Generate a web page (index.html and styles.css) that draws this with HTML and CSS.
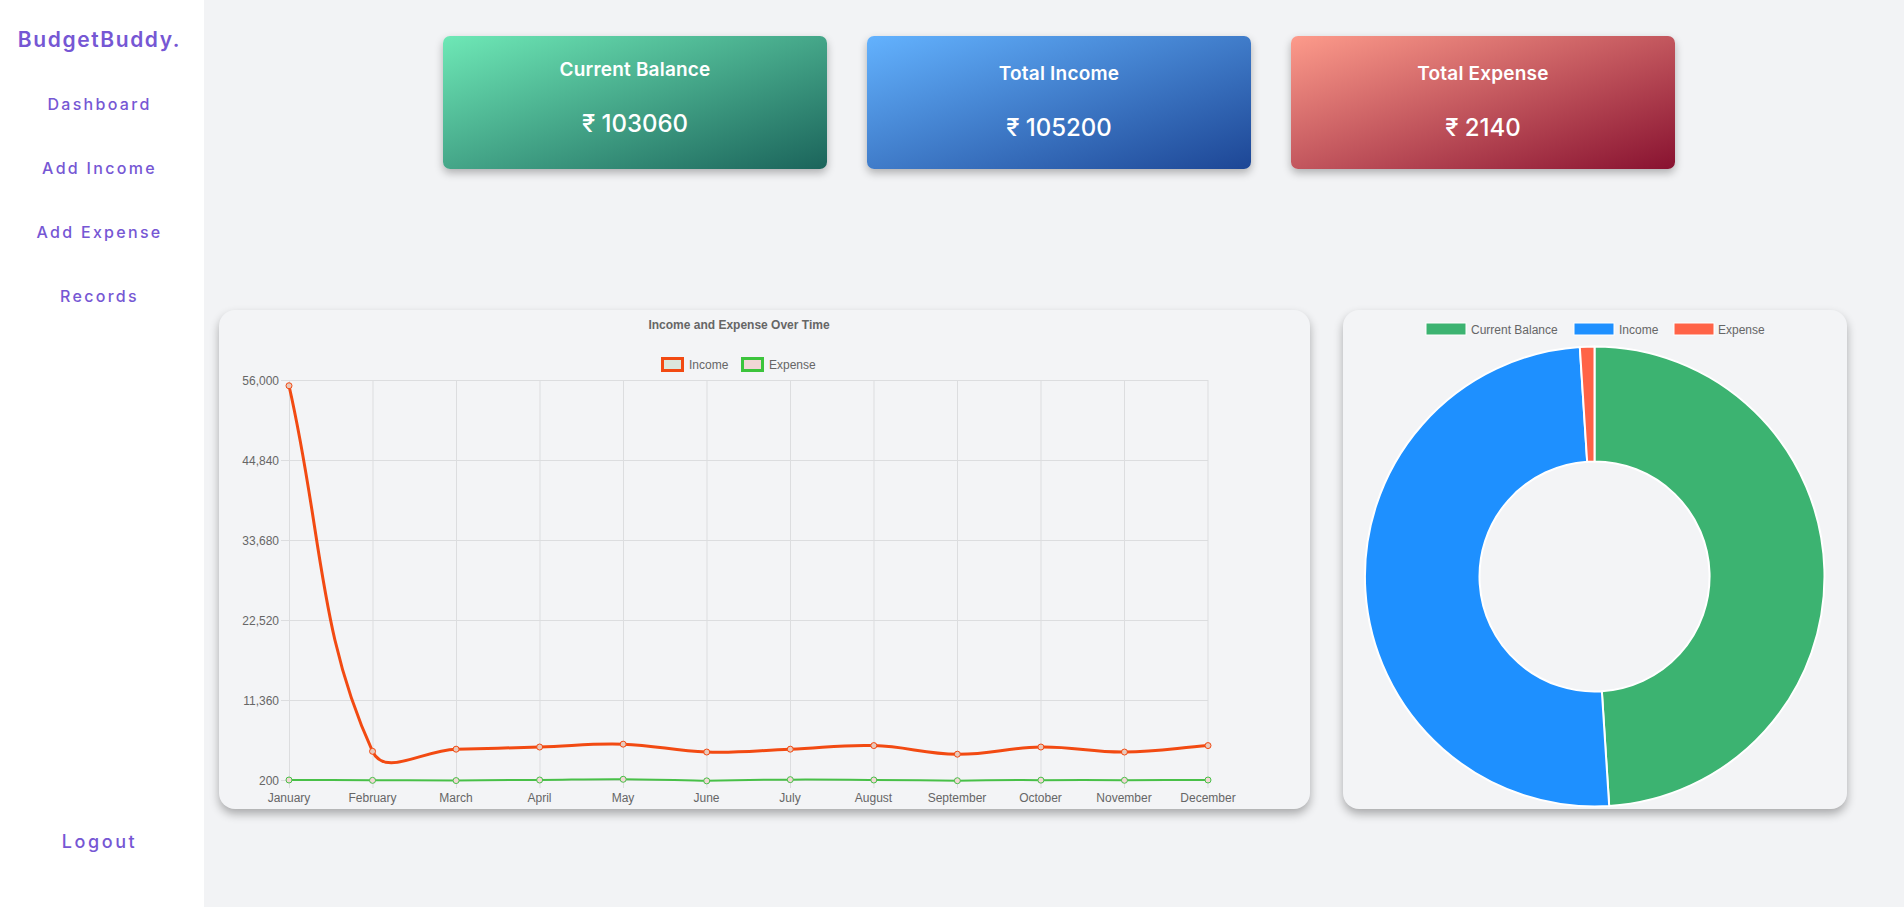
FILE: index.html
```html
<!DOCTYPE html>
<html lang="en">
<head>
<meta charset="utf-8">
<title>BudgetBuddy</title>
<link rel="stylesheet" href="styles.css">
</head>
<body>
<div class="app">
  <aside class="sidebar">
    <div class="logo">BudgetBuddy.</div>
    <nav class="nav">
      <a href="#">Dashboard</a>
      <a href="#">Add Income</a>
      <a href="#">Add Expense</a>
      <a href="#">Records</a>
    </nav>
    <a class="logout" href="#">Logout</a>
  </aside>

  <main class="main">
    <section class="cards">
      <div class="card card-balance card-first">
        <div class="card-title">Current Balance</div>
        <div class="card-value">₹ 103060</div>
      </div>
      <div class="card card-income">
        <div class="card-title">Total Income</div>
        <div class="card-value">₹ 105200</div>
      </div>
      <div class="card card-expense">
        <div class="card-title">Total Expense</div>
        <div class="card-value">₹ 2140</div>
      </div>
    </section>

    <section class="charts">
      <div class="chart-card line-card">
        <svg class="chart-svg" viewBox="0 0 1091 499" width="1091" height="499">
          <text class="chart-title" x="520" y="19" text-anchor="middle">Income and Expense Over Time</text>
          <rect x="443.5" y="48.5" width="20" height="12" fill="#dbe7dc" stroke="#f24a12" stroke-width="3"/>
          <text class="chart-label" x="470" y="59">Income</text>
          <rect x="523.5" y="48.5" width="20" height="12" fill="#f2d6d6" stroke="#3cc43c" stroke-width="3"/>
          <text class="chart-label" x="550" y="59">Expense</text>

          <g class="grid" stroke="#dcdddf" stroke-width="1">
            <line x1="62" y1="70.5" x2="989" y2="70.5"/>
            <line x1="62" y1="150.5" x2="989" y2="150.5"/>
            <line x1="62" y1="230.5" x2="989" y2="230.5"/>
            <line x1="62" y1="310.5" x2="989" y2="310.5"/>
            <line x1="62" y1="390.5" x2="989" y2="390.5"/>
            <line x1="62" y1="470.5" x2="989" y2="470.5"/>
            <line x1="70.5" y1="70" x2="70.5" y2="478"/>
            <line x1="154" y1="70" x2="154" y2="478"/>
            <line x1="237.5" y1="70" x2="237.5" y2="478"/>
            <line x1="321" y1="70" x2="321" y2="478"/>
            <line x1="404.5" y1="70" x2="404.5" y2="478"/>
            <line x1="488" y1="70" x2="488" y2="478"/>
            <line x1="571.5" y1="70" x2="571.5" y2="478"/>
            <line x1="655" y1="70" x2="655" y2="478"/>
            <line x1="738.5" y1="70" x2="738.5" y2="478"/>
            <line x1="822" y1="70" x2="822" y2="478"/>
            <line x1="905.5" y1="70" x2="905.5" y2="478"/>
            <line x1="989" y1="70" x2="989" y2="478"/>
          </g>

          <g class="y-labels" text-anchor="end">
            <text class="chart-label" x="60" y="75">56,000</text>
            <text class="chart-label" x="60" y="155">44,840</text>
            <text class="chart-label" x="60" y="235">33,680</text>
            <text class="chart-label" x="60" y="315">22,520</text>
            <text class="chart-label" x="60" y="395">11,360</text>
            <text class="chart-label" x="60" y="475">200</text>
          </g>

          <g class="x-labels" text-anchor="middle">
            <text class="chart-label" x="70" y="492">January</text>
            <text class="chart-label" x="153.5" y="492">February</text>
            <text class="chart-label" x="237" y="492">March</text>
            <text class="chart-label" x="320.5" y="492">April</text>
            <text class="chart-label" x="404" y="492">May</text>
            <text class="chart-label" x="487.5" y="492">June</text>
            <text class="chart-label" x="571" y="492">July</text>
            <text class="chart-label" x="654.5" y="492">August</text>
            <text class="chart-label" x="738" y="492">September</text>
            <text class="chart-label" x="821.5" y="492">October</text>
            <text class="chart-label" x="905" y="492">November</text>
            <text class="chart-label" x="989" y="492">December</text>
          </g>

          <g id="expense-series"></g>
          <g id="income-series"></g>
        </svg>
      </div>

      <div class="chart-card donut-card">
        <svg class="chart-svg" viewBox="0 0 504 499" width="504" height="499">
          <rect x="83" y="13" width="40" height="12" fill="#3cb371" stroke="#fff" stroke-width="1"/>
          <text class="chart-label" x="128" y="23.5">Current Balance</text>
          <rect x="231" y="13" width="40" height="12" fill="#1e90ff" stroke="#fff" stroke-width="1"/>
          <text class="chart-label" x="276" y="23.5">Income</text>
          <rect x="331" y="13" width="40" height="12" fill="#ff6347" stroke="#fff" stroke-width="1"/>
          <text class="chart-label" x="375" y="23.5">Expense</text>

          <g stroke="#fff" stroke-width="2" stroke-linejoin="round">
            <path fill="#3cb371" d="M 251.5 36.5 A 230 230 0 0 1 266.19 496.03 L 258.85 381.27 A 115 115 0 0 0 251.5 151.5 Z"/>
            <path fill="#1e90ff" d="M 266.19 496.03 A 230 230 0 0 1 236.81 36.97 L 244.16 151.73 A 115 115 0 0 0 258.85 381.27 Z"/>
            <path fill="#ff6347" d="M 236.81 36.97 A 230 230 0 0 1 251.5 36.5 L 251.5 151.5 A 115 115 0 0 0 244.16 151.73 Z"/>
          </g>
        </svg>
      </div>
    </section>
  </main>
</div>
<script src="app.js"></script>
</body>
</html>
```

FILE: styles.css
```css
* {
  box-sizing: border-box;
}

body {
  margin: 0;
  background: #f2f3f5;
  font-family: Inter, "Noto Sans", "DejaVu Sans", sans-serif;
}

.app {
  display: flex;
  height: 100vh;
}

/* Sidebar */
.sidebar {
  width: 204px;
  flex: none;
  background: #ffffff;
  display: flex;
  flex-direction: column;
  align-items: center;
  padding: 28px 5px 53px 0;
}

.logo {
  font-size: 21px;
  line-height: 24px;
  font-weight: 600;
  letter-spacing: 1.6px;
  color: #7657d4;
}

.nav {
  display: flex;
  flex-direction: column;
  align-items: center;
  gap: 44px;
  margin-top: 42px;
}

.nav a,
.logout {
  color: #7657d4;
  text-decoration: none;
  font-weight: 500;
}

.nav a {
  font-size: 16px;
  line-height: 20px;
  letter-spacing: 2.3px;
}

.logout {
  margin-top: auto;
  font-size: 18px;
  line-height: 24px;
  letter-spacing: 2.6px;
}

/* Main */
.main {
  flex: 1;
  display: flex;
  flex-direction: column;
  padding: 36px 57px 0 15px;
}

.cards {
  display: flex;
  justify-content: center;
  gap: 40px;
  padding-left: 52px;
}

.card {
  width: 384px;
  height: 133px;
  border-radius: 7px;
  color: #ffffff;
  text-align: center;
  padding-top: 27px;
  box-shadow: 0 4px 9px rgba(0, 0, 0, 0.28);
}

.card-first {
  padding-top: 23px;
}

.card-balance {
  background: linear-gradient(to bottom right, #6ee8b6, #1b645b);
}

.card-income {
  background: linear-gradient(to bottom right, #63b2fe, #1d4695);
}

.card-expense {
  background: linear-gradient(to bottom right, #fd9b8b, #881230);
}

.card-title {
  font-size: 19px;
  line-height: 22px;
  font-weight: 600;
  letter-spacing: 0.2px;
}

.card-value {
  margin-top: 28px;
  font-size: 24px;
  line-height: 30px;
  font-weight: 500;
}

/* Charts */
.charts {
  display: flex;
  gap: 33px;
  margin-top: 141px;
  height: 499px;
}

.chart-card {
  height: 499px;
  background: #f3f4f6;
  border-radius: 16px;
  box-shadow: 0 5px 10px rgba(0, 0, 0, 0.3);
  overflow: hidden;
}

.line-card {
  width: 1091px;
}

.donut-card {
  width: 504px;
}

.chart-svg {
  display: block;
}

.chart-title {
  font-family: "Liberation Sans", Arial, sans-serif;
  font-size: 12px;
  font-weight: 700;
  fill: #666666;
}

.chart-label {
  font-family: "Liberation Sans", Arial, sans-serif;
  font-size: 12px;
  fill: #666666;
}
```

FILE: app.js
```js
(function () {
  var NS = 'http://www.w3.org/2000/svg';
  var left = 70, right = 989, top = 70, bottom = 470;
  var step = (right - left) / 11;
  var vMin = 200, vMax = 56000;

  function yOf(v) {
    return bottom - (v - vMin) / (vMax - vMin) * (bottom - top);
  }

  function toPoints(data) {
    return data.map(function (v, i) {
      return { x: left + i * step, y: yOf(v) };
    });
  }

  function clamp(v, a, b) { return Math.max(a, Math.min(b, v)); }

  function controlPoints(pts, t) {
    return pts.map(function (cur, i) {
      var prev = pts[i - 1] || cur;
      var next = pts[i + 1] || cur;
      var d01 = Math.hypot(cur.x - prev.x, cur.y - prev.y);
      var d12 = Math.hypot(next.x - cur.x, next.y - cur.y);
      var s01 = d01 / (d01 + d12) || 0;
      var s12 = d12 / (d01 + d12) || 0;
      var fa = t * s01, fb = t * s12;
      return {
        prev: {
          x: clamp(cur.x - fa * (next.x - prev.x), left, right),
          y: clamp(cur.y - fa * (next.y - prev.y), top, bottom)
        },
        next: {
          x: clamp(cur.x + fb * (next.x - prev.x), left, right),
          y: clamp(cur.y + fb * (next.y - prev.y), top, bottom)
        }
      };
    });
  }

  function pathOf(pts) {
    var cps = controlPoints(pts, 0.4);
    var d = 'M ' + pts[0].x.toFixed(2) + ' ' + pts[0].y.toFixed(2);
    for (var i = 1; i < pts.length; i++) {
      var a = cps[i - 1].next, b = cps[i].prev, p = pts[i];
      d += ' C ' + a.x.toFixed(2) + ' ' + a.y.toFixed(2) + ' ' +
        b.x.toFixed(2) + ' ' + b.y.toFixed(2) + ' ' +
        p.x.toFixed(2) + ' ' + p.y.toFixed(2);
    }
    return d;
  }

  function el(name, attrs) {
    var n = document.createElementNS(NS, name);
    for (var k in attrs) n.setAttribute(k, attrs[k]);
    return n;
  }

  function draw(id, data, stroke, fill, width) {
    var g = document.getElementById(id);
    var pts = toPoints(data);
    g.appendChild(el('path', {
      d: pathOf(pts), fill: 'none', stroke: stroke,
      'stroke-width': width, 'stroke-linejoin': 'round', 'stroke-linecap': 'round'
    }));
    pts.forEach(function (p) {
      g.appendChild(el('circle', {
        cx: p.x, cy: p.y, r: 3, fill: fill, stroke: stroke, 'stroke-width': 1
      }));
    });
  }

  var income = [55200, 4200, 4500, 4800, 5200, 4100, 4500, 5000, 3800, 4800, 4100, 5000];
  var expense = [200, 150, 120, 200, 300, 80, 250, 200, 100, 180, 160, 200];

  draw('expense-series', expense, '#48c048', '#f2d6d6', 2);
  draw('income-series', income, '#f24a12', '#e8c9bc', 3);
})();
```
